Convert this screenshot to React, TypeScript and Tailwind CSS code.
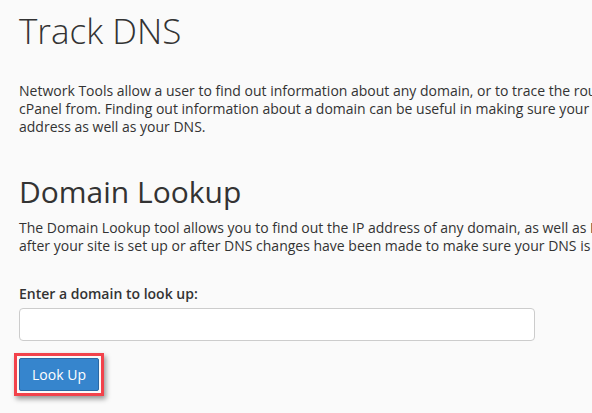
import React from "react";

export default function App() {
  return (
    <div
      className="w-[592px] h-[413px] overflow-hidden bg-[#fafafa] text-[#333333]"
      style={{ fontFamily: '"Open Sans", "Liberation Sans", sans-serif' }}
    >
      <div className="pl-[19px] w-[900px]">
        <h1 className="pt-[11px] text-[35px] leading-[40px] font-light text-[#333333]">
          Track DNS
        </h1>
        <p className="mt-[31px] text-[14px] leading-[18px] whitespace-nowrap">
          Network Tools allow a user to find out information about any domain, or to trace the route from the server your site is on to the computer you are accessing
          <br />
          cPanel from. Finding out information about a domain can be useful in making sure your DNS is set up properly as you will find out information about your IP
          <br />
          address as well as your DNS.
        </p>
        <h2 className="mt-[39px] text-[30px] leading-[33px] font-normal">Domain Lookup</h2>
        <p className="mt-[11px] text-[14px] leading-[18px] whitespace-nowrap">
          The Domain Lookup tool allows you to find out the IP address of any domain, as well as DNS information about that domain. This can be a very useful tool right
          <br />
          after your site is set up or after DNS changes have been made to make sure your DNS is setup properly.
        </p>
        <label className="block mt-[30px] text-[14px] leading-[18px] font-semibold">
          Enter a domain to look up:
        </label>
        <input
          type="text"
          className="block mt-[5px] w-[516px] h-[33px] bg-white border border-[#cccccc] rounded-[4px] outline-none"
        />
        <div className="mt-[12px] ml-[-5px] inline-block border-[3px] border-[#f2424b] p-[2px] shadow-[2px_3px_5px_rgba(0,0,0,0.4)]">
          <button className="block w-[80px] h-[33px] bg-[#3685cd] border border-[#2a68a3] rounded-[2px] text-white text-[14px]">
            Look Up
          </button>
        </div>
      </div>
    </div>
  );
}
